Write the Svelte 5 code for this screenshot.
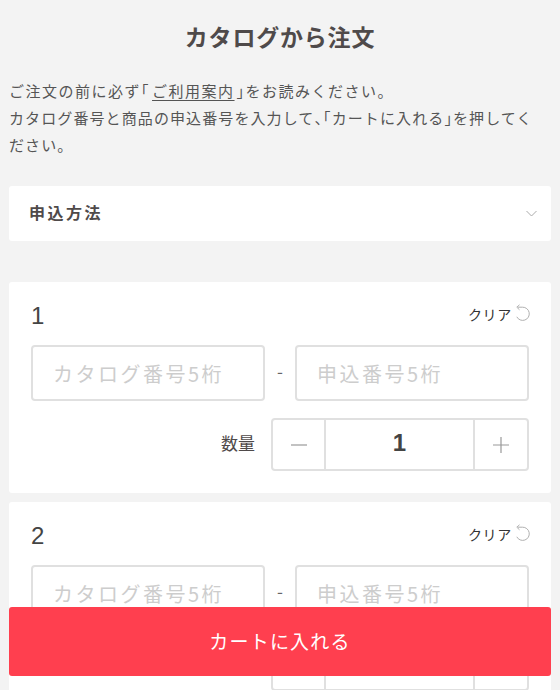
<script>
  const items = [1, 2];
</script>

<div class="page">
  <h1>カタログから注文</h1>
  <p class="intro"><span class="first">ご注文の前に必ず<span class="half">「</span><a href="#guide">ご利用案内</a><span class="half">」</span>をお読みください。</span><br />カタログ番号と商品の申込番号を入力して<span class="half">、</span><span class="half">「</span>カートに入れる<span class="half">」</span>を押してください。</p>

  <div class="accordion">
    <span class="acc-label">申込方法</span>
    <svg width="11" height="7" viewBox="0 0 11 7" fill="none"><path d="M.5 1l5 5 5-5" stroke="#aaa" stroke-width="1" /></svg>
  </div>

  <div class="cards">
    {#each items as n}
      <section class="card">
        <div class="head">
          <span class="num">{n}</span>
          <span class="clear">クリア<svg width="18" height="18" viewBox="0 0 18 18" fill="none"><path d="M4 3.2h4.4a6.6 6.6 0 1 1-5.6 9.6" stroke="#b0b0b0" stroke-width="1" /><path d="M5.5 .8L2.8 3.2l2.7 2.6" stroke="#b0b0b0" stroke-width="1" /></svg></span>
        </div>
        <div class="inputs">
          <input placeholder="カタログ番号5桁" />
          <span class="dash">-</span>
          <input placeholder="申込番号5桁" />
        </div>
        <div class="qty">
          <span class="qty-label">数量</span>
          <div class="stepper">
            <span class="step"><svg width="16" height="16" viewBox="0 0 16 16"><path d="M0 8h16" stroke="#999" stroke-width="1.2" /></svg></span>
            <span class="value">1</span>
            <span class="step"><svg width="16" height="16" viewBox="0 0 16 16"><path d="M0 8h16M8 0v16" stroke="#999" stroke-width="1.2" /></svg></span>
          </div>
        </div>
      </section>
    {/each}
  </div>

  <button class="cart">カートに入れる</button>
</div>

<style>
  :global(html), :global(body) {
    margin: 0;
    height: 690px;
    overflow: hidden;
    background: #f3f3f3;
  }
  .page {
    box-sizing: border-box;
    padding: 0 9px;
    height: 690px;
    overflow: hidden;
    color: #4f4a4a;
    font-family: "Noto Sans CJK JP", "Liberation Sans", sans-serif;
  }
  h1 {
    margin: 0;
    padding-top: 20px;
    font-size: 23px;
    line-height: 32px;
    letter-spacing: 0.8px;
    font-weight: 700;
    text-align: center;
  }
  .intro {
    margin: 25px 0 0;
    padding-right: 12px;
    font-size: 15px;
    line-height: 27px;
    letter-spacing: 1.1px;
    font-weight: 400;
    color: #555;
  }
  .first { letter-spacing: 1.5px; }
  .half { font-feature-settings: "halt" 1; }
  .intro a {
    color: inherit;
    padding: 0 2px;
    text-decoration: underline;
    text-underline-offset: 3px;
  }
  .accordion {
    margin-top: 28px;
    height: 55px;
    background: #fff;
    border-radius: 3px;
    display: flex;
    align-items: center;
    justify-content: space-between;
    padding: 0 14px 0 20px;
    font-size: 16px;
    font-weight: 700;
    letter-spacing: 2.5px;
  }
  .acc-label { padding-bottom: 4px; }
  .cards {
    margin-top: 41px;
    display: flex;
    flex-direction: column;
    gap: 9px;
  }
  .card {
    background: #fff;
    border-radius: 3px;
    height: 211px;
    box-sizing: border-box;
    padding: 19px 22px 0;
  }
  .head {
    display: flex;
    justify-content: space-between;
    align-items: flex-start;
    height: 44px;
    margin-right: -3px;
  }
  .num {
    font-family: "Liberation Sans", sans-serif;
    font-size: 24px;
    line-height: 30px;
    color: #444;
  }
  .clear {
    display: flex;
    align-items: flex-start;
    font-size: 14px;
    line-height: 26px;
    letter-spacing: 0.7px;
    color: #333;
    font-weight: 400;
  }
  .clear svg { margin-top: 3px; margin-left: 2px; }
  .inputs {
    display: flex;
    align-items: center;
  }
  input {
    box-sizing: border-box;
    flex: 0 0 234px;
    width: 234px;
    height: 56px;
    border: 2px solid #e0e0e0;
    border-radius: 4px;
    padding: 0 0 0 20px;
    background: #fff;
    font-family: "Noto Sans CJK JP", sans-serif;
    font-size: 20px;
    font-weight: 400;
    letter-spacing: 2.5px;
    outline: none;
    min-width: 0;
  }
  input::placeholder {
    color: #cdcdcd;
    opacity: 1;
  }
  .dash {
    flex: 1;
    text-align: center;
    font-size: 17px;
    line-height: 20px;
    padding-bottom: 4px;
    color: #666;
  }
  .qty {
    margin-top: 17px;
    display: flex;
    justify-content: flex-end;
    align-items: center;
    gap: 16px;
  }
  .qty-label {
    font-size: 17px;
    padding-bottom: 4px;
    color: #4f4a4a;
  }
  .stepper {
    box-sizing: border-box;
    width: 258px;
    height: 53px;
    border: 2px solid #e0e0e0;
    border-radius: 4px;
    display: grid;
    grid-template-columns: 51px 1fr 52px;
  }
  .step {
    display: flex;
    align-items: center;
    justify-content: center;
  }
  .value {
    border-left: 2px solid #e0e0e0;
    border-right: 2px solid #e0e0e0;
    display: flex;
    align-items: center;
    justify-content: center;
    padding-bottom: 3px;
    font-family: "Liberation Sans", sans-serif;
    font-size: 24px;
    font-weight: 700;
    color: #444;
  }
  .cart {
    position: fixed;
    left: 9px;
    right: 9px;
    top: 607px;
    height: 69px;
    border: 0;
    border-radius: 3px;
    padding: 0 0 2px;
    background: #ff3f4f;
    color: #fff;
    font-family: "Noto Sans CJK JP", sans-serif;
    font-size: 19px;
    font-weight: 400;
    letter-spacing: 1.2px;
  }
</style>
